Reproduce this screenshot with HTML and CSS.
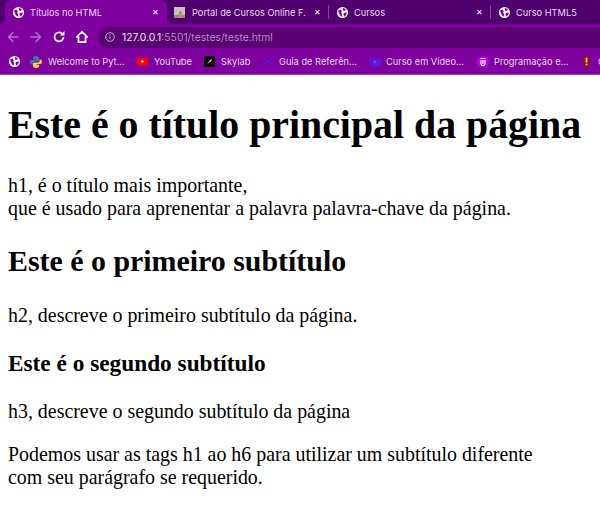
FILE: index.html
```html
<!DOCTYPE html>
<html lang="pt-BR">
<head>
  <meta charset="UTF-8">
  <title>Títulos no HTML</title>
  <link rel="stylesheet" href="styles.css">
</head>
<body>

<svg class="sprite" width="0" height="0">
  <symbol id="globe" viewBox="0 0 16 16">
    <circle cx="8" cy="8" r="8" fill="#fff"/>
    <path d="M1.500 5 5 3.500l2 2.500-1 2.500 1.500 2v3.500C5 13 2.500 10 1.500 5zM8.500 1.500 13 3l-1.500 2.500H9zM10 8.500h4.500C14 11 12.500 13 10.500 14L9.500 11z" fill="#7c0099"/>
  </symbol>
</svg>

<header class="browser">
  <div class="tabstrip">
    <div class="tab tab-active">
      <svg class="fav"><use href="#globe"/></svg>
      <span class="tab-title">Títulos no HTML</span>
      <span class="tab-close">✕</span>
    </div>
    <div class="tab tab-second">
      <svg class="fav" viewBox="0 0 11 11">
        <rect width="11" height="11" fill="#c9c4bb"/>
        <rect y="8" width="11" height="3" fill="#8f8a7d"/>
        <path d="M4 11 5 5l1.500-2L8 6l1 5z" fill="#b98f72"/>
      </svg>
      <span class="tab-title">Portal de Cursos Online F.</span>
      <span class="tab-close">✕</span>
    </div>
    <div class="tab tab-third">
      <svg class="fav"><use href="#globe"/></svg>
      <span class="tab-title">Cursos</span>
      <span class="tab-close">✕</span>
    </div>
    <div class="tab tab-fourth">
      <svg class="fav"><use href="#globe"/></svg>
      <span class="tab-title">Curso HTML5</span>
    </div>
  </div>

  <div class="toolbar">
    <div class="nav-buttons">
      <svg class="nav-icon" viewBox="0 0 12 12"><path d="M11.500 6H2M6.500 1 1.500 6l5 5" class="stroke-dim"/></svg>
      <svg class="nav-icon" viewBox="0 0 12 12"><path d="M.5 6H10M5.500 1l5 5-5 5" class="stroke-dim"/></svg>
      <svg class="nav-icon" viewBox="0 0 12 12"><path d="M10.500 6A4.500 4.500 0 1 1 9 2.600" class="stroke-on"/><path d="M7 4.500h4.500V0z" fill="#fff"/></svg>
      <svg class="nav-icon" viewBox="0 0 12 12"><path d="M6 .8.600 6H2.500v5.200h7V6h1.900z" class="stroke-on"/></svg>
    </div>
    <div class="omnibox">
      <svg class="info" viewBox="0 0 10 10">
        <circle cx="5" cy="5" r="4.300" fill="none" stroke="#c9a9d6" stroke-width="1"/>
        <path d="M5 4.300v3M5 2.400v1" stroke="#c9a9d6" stroke-width="1"/>
      </svg>
      <span class="url">127.0.0.1<span class="url-dim">:5501/testes/teste.html</span></span>
    </div>
  </div>

  <div class="bookmarks">
    <div class="mark mark-apps"><svg class="fav"><use href="#globe"/></svg></div>
    <div class="mark mark-python">
      <svg class="fav-big" viewBox="0 0 12 12">
        <path d="M6 0C3.500 0 3 1 3 2v1.500h3V4H1.500C.5 4 0 5 0 6.200S.5 8.500 1.500 8.500H3V7c0-1 .8-1.500 1.500-1.500h3C8.300 5.500 9 5 9 4V2C9 1 8 0 6 0z" fill="#3f78ab"/>
        <path d="M6 12c2.500 0 3-1 3-2V8.500H6V8h4.500c1 0 1.500-1 1.500-2.200S11.500 3.500 10.500 3.500H9.500V5c0 1-.8 1.500-1.500 1.500H4.500C3.700 6.500 3 7 3 8v2c0 1 1 2 3 2z" fill="#f5d44c"/>
      </svg>
      <span>Welcome to Pyt...</span>
    </div>
    <div class="mark mark-youtube">
      <svg class="fav" viewBox="0 0 11 11">
        <rect y="1.500" width="11" height="8" rx="1.500" fill="#f00"/>
        <path d="M4.500 3.800 7.300 5.500 4.500 7.200z" fill="#fff"/>
      </svg>
      <span>YouTube</span>
    </div>
    <div class="mark mark-skylab">
      <svg class="fav" viewBox="0 0 11 11">
        <rect width="11" height="11" fill="#0b0b0b"/>
        <path d="M3 8 5 5.500l3-3-1 3-2 1z" fill="#e8e8e8"/>
      </svg>
      <span>Skylab</span>
    </div>
    <div class="mark mark-guia">
      <svg class="fav" viewBox="0 0 11 11">
        <path d="M1.500 1v2.500L9.500 7.500V10M9.500 1v2.500L1.500 7.500V10" fill="none" stroke="#5f14dc" stroke-width="1.300"/>
      </svg>
      <span>Guia de Referên...</span>
    </div>
    <div class="mark mark-curso">
      <svg class="fav-big" viewBox="0 0 12 12">
        <path d="M0 1.500 2.500 2.500h7L12 1.500v7L9.500 10.500h-7L0 8.500z" fill="#5f14dc"/>
        <path d="M4.800 4 8 6 4.800 8z" fill="#9a30ea"/>
      </svg>
      <span class="mark-curso-label">Curso em Vídeo...</span>
    </div>
    <div class="mark mark-prog">
      <svg class="fav-big" viewBox="0 0 12 12">
        <circle cx="6" cy="6" r="6" fill="#b400f0"/>
        <path d="M3.500 2.500h5M4 4v3.500a2 2 0 0 0 4 0V4M6 4v4" fill="none" stroke="#fff" stroke-width="1.100"/>
      </svg>
      <span class="mark-prog-label">Programação e...</span>
    </div>
    <div class="mark mark-last">
      <svg class="fav" viewBox="0 0 10 12">
        <rect x="1" width="8" height="12" rx="2" fill="#8c1320"/>
        <path d="M5 2v5M5 8.500v1.500" stroke="#f3d2b0" stroke-width="2"/>
      </svg>
      <span>C</span>
    </div>
  </div>
</header>

<main class="page">
  <h1>Este é o título principal da página</h1>
  <p>h1, é o título mais importante,<br>que é usado para aprenentar a palavra palavra-chave da página.</p>
  <h2>Este é o primeiro subtítulo</h2>
  <p>h2, descreve o primeiro subtítulo da página.</p>
  <h3>Este é o segundo subtítulo</h3>
  <p>h3, descreve o segundo subtítulo da página</p>
  <p>Podemos usar as tags h1 ao h6 para utilizar um subtítulo diferente<br>com seu parágrafo se requerido.</p>
</main>

</body>
</html>
```

FILE: styles.css
```css
* { box-sizing: border-box; }
html, body { margin: 0; height: 100%; overflow: hidden; }
body { background: #fff; font-family: "Liberation Serif", serif; color: #000; }

.sprite { display: block; height: 0; }
.fav { width: 11px; height: 11px; flex: none; display: block; }
.fav-big { width: 12px; height: 12px; flex: none; display: block; }

.browser { height: 75px; font-family: Inter, "Noto Sans", sans-serif; color: #ecd9f3; }

/* abas */
.tabstrip { height: 24px; background: #4f006c; display: flex; padding-left: 5px; font-size: 9.250px; }
.tab { display: flex; align-items: center; height: 24px; position: relative; }
.tab-title { white-space: nowrap; }
.tab-close { font-size: 8px; color: #fff; margin-left: auto; }
.tab-active {
  width: 162px; padding: 0 8px 0 8px; background: #7e009e; border-radius: 7px 7px 0 0;
}
.tab-active .tab-title { margin-left: 6px; }
.tab-active::before, .tab-active::after {
  content: ""; position: absolute; bottom: 0; width: 6px; height: 6px;
}
.tab-active::before { left: -6px; background: radial-gradient(circle at 0 0, #4f006c 6px, #7e009e 6.500px); }
.tab-active::after { right: -6px; background: radial-gradient(circle at 100% 0, #4f006c 6px, #7e009e 6.500px); }
.tab-second { width: 162px; padding: 0 7px 0 7px; border-right: 1px solid #7a4a90; height: 14px; margin-top: 5px; }
.tab-second .tab-title { margin-left: 7px; }
.tab-third { width: 162px; padding: 0 7px 0 8px; border-right: 1px solid #7a4a90; height: 14px; margin-top: 5px; }
.tab-third .tab-title { margin-left: 6px; }
.tab-fourth { flex: 1; padding-left: 8px; height: 14px; margin-top: 5px; }
.tab-fourth .tab-title { margin-left: 6px; }

/* barra de endereço */
.toolbar { height: 26px; background: #7e009e; display: flex; align-items: center; padding-left: 7px; }
.nav-buttons { display: flex; gap: 11px; width: 91px; flex: none; }
.nav-icon { width: 12px; height: 12px; display: block; }
.stroke-dim { fill: none; stroke: #b070c8; stroke-width: 1.400; }
.stroke-on { fill: none; stroke: #fff; stroke-width: 1.700; }
.omnibox {
  flex: 1; height: 21px; background: #5a0072; border-radius: 11px 0 0 11px;
  display: flex; align-items: center; padding-left: 7px; font-size: 10.350px;
}
.info { width: 10px; height: 10px; flex: none; margin-right: 7px; }
.url { color: #f2e4f7; white-space: nowrap; }
.url-dim { color: #b48cc6; }

/* favoritos */
.bookmarks {
  height: 25px; background: #7e009e; border-bottom: 1px solid #9a40b4;
  display: flex; align-items: center; padding: 0 0 1px 9px; font-size: 9.250px; white-space: nowrap; overflow: hidden;
}
.mark { display: flex; align-items: center; gap: 6px; flex: none; }
.mark-apps { width: 21px; }
.mark-python { width: 107px; }
.mark-youtube { width: 67px; }
.mark-skylab { width: 58px; }
.mark-guia { width: 107px; }
.mark-curso { width: 108px; }
.mark-curso-label, .mark-prog-label { margin-left: -1px; }
.mark-prog { width: 104px; }

/* conteúdo */
.page { padding: 0 8px; }
h1 { font-size: 39.850px; margin: 26px 0 25.800px; }
h2 { font-size: 29.900px; margin: 24.500px 0 25.500px; }
h3 { font-size: 23.300px; margin: 23.200px 0; }
p { font-size: 19.920px; margin: 19.800px 0; }
```
